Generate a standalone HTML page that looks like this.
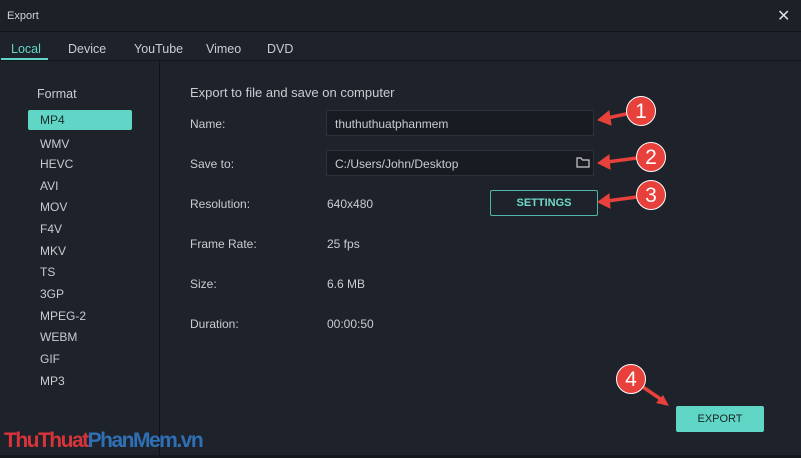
<!DOCTYPE html><html><head><style>
body{margin:0;width:801px;height:458px;background:#1e232b;font-family:"Liberation Sans",sans-serif;color:#c9ccd0;position:relative;overflow:hidden;font-size:12px}
.a{position:absolute;white-space:nowrap}
.tb{left:0;top:0;width:801px;height:31px;background:#1c2027;border-bottom:1px solid #111418}
.fmt{left:40px;font-size:12px;color:#c8cbcf}
.lbl{left:190px;font-size:12px}
.val{left:327px;font-size:12px}
.box{background:#181c22;border:1px solid #2c323a;height:26px;width:268px;left:326px;box-sizing:border-box}
.circ{width:30px;height:30px;border-radius:50%;background:#e8403a;color:#fff;font-size:21px;text-align:center;line-height:30px;border:1px solid #fff;box-sizing:border-box}
</style></head><body>
<div class="a tb"></div>
<div class="a" style="left:7px;top:10px;font-size:11px;color:#d0d3d6">Export</div>
<div class="a" style="left:777px;top:6px;font-size:16px;color:#ddd">✕</div>
<div class="a" style="left:11px;top:42px;color:#5fd6c6;font-size:12.5px">Local</div>
<div class="a" style="left:1px;top:58px;width:47px;height:2px;background:#5fd6c6"></div>
<div class="a" style="left:68px;top:42px;font-size:12.5px">Device</div>
<div class="a" style="left:134px;top:42px;font-size:12.5px">YouTube</div>
<div class="a" style="left:206px;top:42px;font-size:12.5px">Vimeo</div>
<div class="a" style="left:267px;top:42px;font-size:12.5px">DVD</div>
<div class="a" style="left:0;top:60px;width:801px;height:1px;background:#121519"></div>
<div class="a" style="left:159px;top:61px;width:1px;height:397px;background:#0f1216"></div>
<div class="a" style="left:0;top:455px;width:801px;height:3px;background:#15191e"></div>
<div class="a" style="left:37px;top:87px;font-size:12.5px">Format</div>
<div class="a" style="left:28px;top:110px;width:104px;height:20px;background:#5fd6c6;border-radius:2px"></div>
<div class="a fmt" style="top:113px;color:#1d2a2a">MP4</div>
<div class="a fmt" style="top:137px">WMV</div>
<div class="a fmt" style="top:157px">HEVC</div>
<div class="a fmt" style="top:179px">AVI</div>
<div class="a fmt" style="top:200px">MOV</div>
<div class="a fmt" style="top:222px">F4V</div>
<div class="a fmt" style="top:244px">MKV</div>
<div class="a fmt" style="top:265px">TS</div>
<div class="a fmt" style="top:287px">3GP</div>
<div class="a fmt" style="top:309px">MPEG-2</div>
<div class="a fmt" style="top:330px">WEBM</div>
<div class="a fmt" style="top:352px">GIF</div>
<div class="a fmt" style="top:374px">MP3</div>
<div class="a" style="left:190px;top:85px;font-size:13px">Export to file and save on computer</div>
<div class="a lbl" style="top:117px">Name:</div>
<div class="a box" style="top:110px"></div><div class="a val" style="left:335px;top:117px">thuthuthuatphanmem</div>
<div class="a lbl" style="top:157px">Save to:</div>
<div class="a box" style="top:150px"></div><div class="a val" style="left:335px;top:157px">C:/Users/John/Desktop</div>
<svg class="a" style="left:576px;top:156px" width="14" height="12"><path d="M1 2h4l1.5 2H13v7H1z" fill="none" stroke="#ccc" stroke-width="1.2"/></svg>
<div class="a lbl" style="top:197px">Resolution:</div><div class="a val" style="top:197px">640x480</div>
<div class="a" style="left:490px;top:190px;width:108px;height:26px;border:1px solid #4fb8aa;box-sizing:border-box;border-radius:2px;color:#6fd8c9;font-weight:bold;font-size:11px;text-align:center;line-height:24px">SETTINGS</div>
<div class="a lbl" style="top:237px">Frame Rate:</div><div class="a val" style="top:237px">25 fps</div>
<div class="a lbl" style="top:277px">Size:</div><div class="a val" style="top:277px">6.6 MB</div>
<div class="a lbl" style="top:317px">Duration:</div><div class="a val" style="top:317px">00:00:50</div>
<div class="a" style="left:676px;top:406px;width:88px;height:26px;background:#5fd6c6;border-radius:2px;color:#1d2626;font-size:11px;text-align:center;line-height:26px">EXPORT</div>
<svg class="a" style="left:595px;top:100px" width="80" height="120">
<g stroke="#e8403a" stroke-width="3.5" fill="#e8403a">
<line x1="36" y1="13" x2="12" y2="18"/><polygon points="3,20 14,11 16,25" stroke-width="1"/>
<line x1="42" y1="58" x2="12" y2="62"/><polygon points="3,63 14,55 15,69" stroke-width="1"/>
<line x1="42" y1="97" x2="12" y2="101"/><polygon points="3,102 14,94 15,108" stroke-width="1"/>
</g></svg>
<div class="a circ" style="left:626px;top:96px">1</div>
<div class="a circ" style="left:636px;top:142px">2</div>
<div class="a circ" style="left:636px;top:180px">3</div>
<svg class="a" style="left:630px;top:380px" width="50" height="30"><line x1="10" y1="5" x2="32" y2="20" stroke="#e8403a" stroke-width="3.5"/><polygon points="39,26 26,23 33,15" fill="#e8403a"/></svg>
<div class="a circ" style="left:616px;top:364px">4</div>
<div class="a" style="left:4px;top:429px;font-size:21px;font-weight:bold;letter-spacing:-1.5px"><span style="color:#d6343a">ThuThuat</span><span style="color:#2f6fb5">PhanMem.vn</span></div>
</body></html>
